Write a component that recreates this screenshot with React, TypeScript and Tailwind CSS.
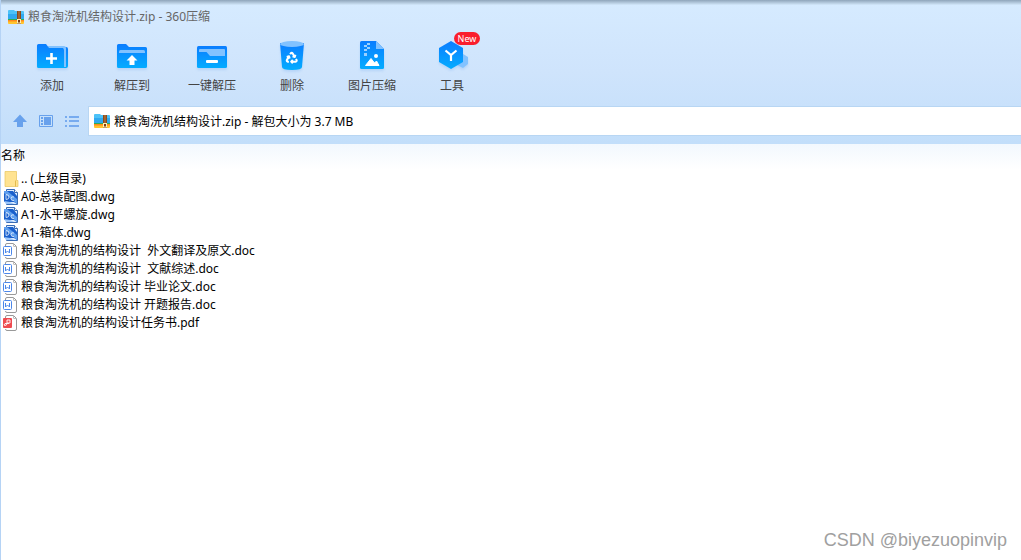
import type { ReactNode } from "react";

interface Tool {
  label: string;
  icon: ReactNode;
  isNew?: boolean;
}

interface FileEntry {
  name: string;
  kind: "folder" | "dwg" | "doc" | "pdf";
}

function ZipIcon() {
  return (
    <svg className="h-4 w-4 shrink-0" viewBox="0 0 16 16" aria-hidden="true">
      <path d="M0 2q0-1 1-1h5l1 1h8q1 0 1 1v9H0z" fill="#4cc2f8" />
      <path d="M0 5h16v5H0z" fill="#2fa9f0" />
      <path d="M0 10h16v1H0z" fill="#2fae54" />
      <path d="M0 11h16v2H0z" fill="#ff8a1c" />
      <path d="M0 12.500h16V14q0 1-1 1H1q-1 0-1-1z" fill="#ffc52e" />
      <path d="M9 2h4v13H9z" fill="#8a4a1c" />
      <path d="M10 3h2M10 5h2M10 7h2M10 9h2" stroke="#c98d50" strokeWidth=".8" />
      <path d="M9 10h4v4.500H9z" fill="#fff0b8" />
      <path d="M10 11h2v2.500h-2z" fill="#7a3d14" />
    </svg>
  );
}

/* Degradado comun de los iconos de la barra */
function Blue({ id }: { id: string }) {
  return (
    <defs>
      <linearGradient id={id} x1="0" y1="0" x2="0" y2="1">
        <stop offset="0" stopColor="#0b7dff" />
        <stop offset="1" stopColor="#04acff" />
      </linearGradient>
    </defs>
  );
}

const toolIcon = "h-8 w-8 drop-shadow-[0_2px_1px_rgba(40,130,230,0.15)]";

const tools: Tool[] = [
  {
    label: "添加",
    icon: (
      <svg className={toolIcon} viewBox="0 0 32 32" aria-hidden="true">
        <Blue id="g-add" />
        <path d="M16 7h14q2 0 2 2v17q0 2-2 2H16z" fill="url(#g-add)" />
        <path d="M12 6h16q2 0 2 2v19h-3V8H12z" fill="#82c2ff" />
        <path d="M1 5.500Q1 4 2.500 4H10l3 4h13q2 0 2 2v18H2.500Q1 28 1 26.500z" fill="url(#g-add)" />
        <path d="M15.500 13v11M10 18.500h11" stroke="#fff" strokeWidth="2.600" />
      </svg>
    ),
  },
  {
    label: "解压到",
    icon: (
      <svg className={toolIcon} viewBox="0 0 32 32" aria-hidden="true">
        <Blue id="g-to" />
        <path d="M1 5.500Q1 4 2.500 4H10l3 3h16.500Q31 7 31 8.500v18Q31 28 29.500 28h-27Q1 28 1 26.500z" fill="url(#g-to)" />
        <path d="M3 13v-1.500Q3 10 4.500 10h23q1.500 0 1.500 1.500V13z" fill="#82c2ff" />
        <path d="M16 15l5.500 5.500H18.500V25h-5v-4.500h-3z" fill="#fff" />
      </svg>
    ),
  },
  {
    label: "一键解压",
    icon: (
      <svg className={toolIcon} viewBox="0 0 32 32" aria-hidden="true">
        <Blue id="g-one" />
        <rect x="1" y="6" width="30" height="22" rx="1.500" fill="url(#g-one)" />
        <path d="M3 12v-2q0-1 1-1h24q1 0 1 1v6H14l-3.500-4z" fill="#82c2ff" />
        <rect x="10" y="20" width="12" height="3" rx="1" fill="#fff" />
      </svg>
    ),
  },
  {
    label: "删除",
    icon: (
      <svg className={toolIcon} viewBox="0 0 32 32" aria-hidden="true">
        <Blue id="g-del" />
        <path d="M4 3h24l-2 24q0 3-10 3T6 27z" fill="url(#g-del)" />
        <ellipse cx="16" cy="4" rx="12" ry="3" fill="#82c2ff" />
        <g transform="translate(9 11) scale(.56)" fill="none" stroke="#fff" strokeWidth="3.600" strokeLinejoin="round">
          <path d="M7 19H4.800a1.800 1.800 0 0 1-1.500-2.700L7.200 9.500M11 19h8.200a1.800 1.800 0 0 0 1.500-2.700l-1.200-2.200M14 16l-3 3 3 3M8.300 13.600 7.200 9.500 3.100 10.600M9.300 5.800l1.100-1.900a1.800 1.800 0 0 1 3.100 0l4 6.900M13.400 9.600l4.100 1.100 1.100-4.100" />
        </g>
      </svg>
    ),
  },
  {
    label: "图片压缩",
    icon: (
      <svg className={toolIcon} viewBox="0 0 32 32" aria-hidden="true">
        <Blue id="g-img" />
        <path d="M4 2.500Q4 1 5.500 1H20l8 8v18.500q0 1.500-1.500 1.500h-21Q4 29 4 27.500z" fill="url(#g-img)" />
        <path d="M20 1l8 8h-8z" fill="#82c2ff" />
        <path d="M11 3h3v2h-3zM8 5h3v2H8zM11 7h3v2h-3zM8 9h3v2H8zM8 13h3v3H8z" fill="#9bd0ff" />
        <circle cx="20" cy="16" r="2" fill="#fff" />
        <path d="M9.500 25.500l5.500-7 3.500 4.500 2-2 2.500 4.500z" fill="#fff" stroke="#fff" strokeLinejoin="round" />
      </svg>
    ),
  },
  {
    label: "工具",
    isNew: true,
    icon: (
      <svg className={toolIcon} viewBox="0 0 32 32" aria-hidden="true">
        <Blue id="g-tool" />
        <path d="M27 14l5 3v7l-5 4-6-3z" fill="#82c2ff" />
        <path d="M15 1l12 7v14l-12 7-12-7V8z" fill="url(#g-tool)" />
        <path d="M9.500 10.500L15 15l5.500-4.500M15 15v6" fill="none" stroke="#fff" strokeWidth="2.200" />
      </svg>
    ),
  },
];

const files: FileEntry[] = [
  { name: ".. (上级目录)", kind: "folder" },
  { name: "A0-总装配图.dwg", kind: "dwg" },
  { name: "A1-水平螺旋.dwg", kind: "dwg" },
  { name: "A1-箱体.dwg", kind: "dwg" },
  { name: "粮食淘洗机的结构设计  外文翻译及原文.doc", kind: "doc" },
  { name: "粮食淘洗机的结构设计  文献综述.doc", kind: "doc" },
  { name: "粮食淘洗机的结构设计 毕业论文.doc", kind: "doc" },
  { name: "粮食淘洗机的结构设计 开题报告.doc", kind: "doc" },
  { name: "粮食淘洗机的结构设计任务书.pdf", kind: "pdf" },
];

function FileIcon({ kind }: { kind: FileEntry["kind"] }) {
  if (kind === "folder") {
    return (
      <svg className="h-4 w-4 shrink-0" viewBox="0 0 16 16" aria-hidden="true">
        <path d="M2 .5h11.500v9H15v6H2z" fill="#ffe391" stroke="#e8c45c" strokeWidth=".7" />
        <path d="M12.500 9.500v6" stroke="#e3bb4c" />
      </svg>
    );
  }
  if (kind === "dwg") {
    return (
      <svg className="h-4 w-4 shrink-0" viewBox="0 0 16 16" aria-hidden="true">
        <path d="M3.500.5h8l3 3v12h-11z" fill="#dcebfd" stroke="#3a6cb5" />
        <path d="M11.500.5v3h3" fill="#fff" stroke="#3a6cb5" />
        <path d="M1 2h9l4 5v8l-3-2H1z" fill="#1a60cc" />
        <path d="M4 2l10 8v5L1 4V2z" fill="#5f9fee" />
        <path d="M3 5.500v5q3 0 3-2.500T3 5.500" fill="none" stroke="#e8f3ff" strokeWidth=".8" />
        <path d="M11 8q-3-1-3 1.500t3 2" fill="none" stroke="#e8f3ff" strokeWidth=".8" />
        <path d="M1 12l6 1 4 2H3z" fill="#9cc6fa" />
      </svg>
    );
  }
  const color = kind === "doc" ? "#4b87ea" : "#ee4b50";
  return (
    <svg className="h-4 w-4 shrink-0" viewBox="0 0 16 16" aria-hidden="true">
      <path d="M2.500 3V2q0-1.500 1.500-1.500h6.500l3 3v10.500q0 1.500-1.500 1.500H4q-1.500 0-1.500-1.500" fill="#fff" stroke="#999" />
      <path d="M10.500.5V3q0 .5.5.5h2.500" fill="none" stroke="#bbb" />
      {kind === "doc" ? (
        <>
          <rect x=".5" y="3.500" width="8" height="9" rx="1" fill="#fff" stroke={color} />
          <path d="M2.500 6v4l2-2 2 2V6" fill="none" stroke={color} />
        </>
      ) : (
        <>
          <rect x="0" y="3" width="9" height="10" rx="1" fill={color} />
          <path d="M4 5h3v3H4zM4 8q0 2.500-2 2.500T2 8.500h4" fill="none" stroke="#fff" strokeWidth=".9" />
        </>
      )}
    </svg>
  );
}

function Toolbar() {
  return (
    <nav className="flex px-3" aria-label="工具栏">
      {tools.map((t) => (
        <button key={t.label} className="relative flex w-20 flex-col items-center gap-1 text-[#444]">
          {t.icon}
          <span className="leading-5">{t.label}</span>
          {t.isNew && (
            <span className="absolute -top-2 left-[42px] h-[13px] w-[26px] rounded-full bg-[#fa1e2d] text-center text-[9px] leading-[13px] text-white">
              New
            </span>
          )}
        </button>
      ))}
    </nav>
  );
}

function AddressBar() {
  return (
    <div className="flex items-center pb-2 pl-3 text-[#68a1ec]">
      <div className="flex gap-[10px] pr-2">
        <button aria-label="上级目录">
          <svg className="h-4 w-4" viewBox="0 0 16 16" aria-hidden="true">
            <path d="M8 1.500L15 9h-4v5H5V9H1z" fill="currentColor" />
          </svg>
        </button>
        <button aria-label="预览">
          <svg className="h-4 w-4" viewBox="0 0 16 16" aria-hidden="true">
            <path d="M1.500 2.500h13v11h-13z" fill="none" stroke="currentColor" />
            <path d="M6 4h7v8H6zM3 4h2v2H3zM3 7h2v2H3zM3 10h2v2H3z" fill="currentColor" />
          </svg>
        </button>
        <button aria-label="列表">
          <svg className="h-4 w-4" viewBox="0 0 16 16" aria-hidden="true">
            <path d="M1 3h2v2H1zM1 7h2v2H1zM1 12h2v2H1zM5 3h10v2H5zM5 7h10v2H5zM5 12h10v2H5z" fill="currentColor" opacity=".85" />
          </svg>
        </button>
      </div>
      <div className="flex h-[30px] flex-1 items-center gap-1 border border-r-0 border-[#b8d6f3] bg-white pl-[5px]">
        <ZipIcon />
        <input
          className="h-5 flex-1 text-black outline-none"
          aria-label="路径"
          readOnly
          value="粮食淘洗机结构设计.zip - 解包大小为 3.7 MB"
        />
      </div>
    </div>
  );
}

export default function App() {
  return (
    <div className="relative flex min-h-screen flex-col bg-white font-['Noto_Sans','Noto_Sans_CJK_SC',sans-serif] text-xs text-black">
      <header className="border-l border-[#b5d3f5] bg-linear-to-b from-[#d6ebff] via-[#cfe4fc] to-[#c2defa]">
        <div className="h-[5px] bg-linear-to-b from-[#8fa5ba] to-[#d3e8fb]" />
        <h1 className="flex h-6 items-center gap-1 pl-[7px] font-normal text-[#666]">
          <ZipIcon />
          粮食淘洗机结构设计.zip - 360压缩
        </h1>
        <div className="-ml-px pt-[11px] pb-[10px]">
          <Toolbar />
        </div>
        <div className="-ml-px">
          <AddressBar />
        </div>
      </header>

      <main className="flex-1 border-l border-[#b5d3f5]">
        <table className="w-full">
          <thead className="bg-linear-to-b from-[#f2f8fe] to-white">
            <tr>
              <th className="h-[26px] pb-[3px] text-left font-normal">名称</th>
            </tr>
          </thead>
          <tbody>
            {files.map((f) => (
              <tr key={f.name}>
                <td className="p-0">
                  <div className="flex h-[18px] items-center gap-[2px] pl-[2px] leading-[18px] whitespace-pre">
                    <FileIcon kind={f.kind} />
                    {f.name}
                  </div>
                </td>
              </tr>
            ))}
          </tbody>
        </table>
      </main>

      <p className="absolute right-[14px] bottom-2 font-['Liberation_Sans',sans-serif] text-lg leading-6 text-[#a0a0a0]">
        CSDN @biyezuopinvip
      </p>
    </div>
  );
}
